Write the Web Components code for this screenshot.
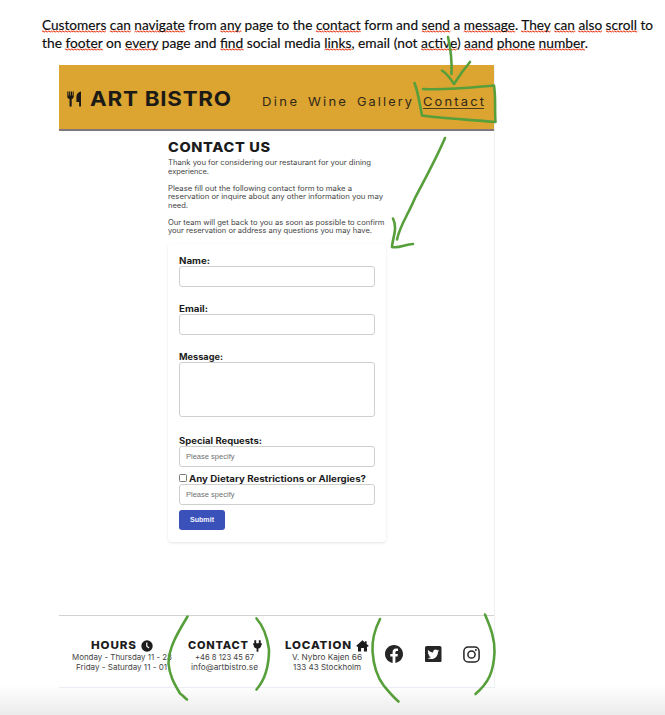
<!DOCTYPE html>
<html lang="en">
<head>
<meta charset="utf-8">
<title>Art Bistro – Contact</title>
<style>
body{margin:0;height:715px;overflow:hidden;background:#fff}
</style>
</head>
<body>
<walkthrough-page></walkthrough-page>
<script>
const define = (name, html, setup) => customElements.define(name, class extends HTMLElement {
  connectedCallback() {
    if (this.shadowRoot) return;
    const t = document.createElement('template');
    t.innerHTML = typeof html === 'function' ? html(this) : html;
    this.attachShadow({mode: 'open'}).append(t.content.cloneNode(true));
    if (setup) setup(this);
  }
});

/* One line of text, stretched to the width in its "w" attribute; "ls" is its tracking. */
define('text-line', `<style>
  :host{display:block;white-space:nowrap}
  span{display:block;width:max-content;transform-origin:0 50%}
  ::slotted(u){text-decoration:none;padding-bottom:1px;background:url("data:image/svg+xml,%3Csvg xmlns='http://www.w3.org/2000/svg' width='3' height='3'%3E%3Cpath d='M-.5 2.500L.750.700 2.250 2.300 3.500.700' fill='none' stroke='%23e8401f' stroke-width='1'/%3E%3C/svg%3E") repeat-x 0 calc(100% - 1px)}
</style><span><slot></slot></span>`, el => {
  const span = el.shadowRoot.querySelector('span');
  const w = parseFloat(el.getAttribute('w'));
  const ls = parseFloat(el.getAttribute('ls')) || 0;
  span.style.letterSpacing = ls + 'px';
  const natural = span.getBoundingClientRect().width - ls;
  span.style.width = natural + 'px';
  span.style.transform = `scaleX(${w / natural})`;
  el.style.width = w + 'px';
});

const ICONS = {
  utensils: ['0 0 15 16', '<path d="M.3.600h1.200v4h.6v-4h1.200v4h.6v-4h1.200v4h.6v-4h1v4.800c0 1.500-.9 2.200-2 2.500v7.700H2.500V7.900C1.200 7.600.3 6.900.3 5.400z"/><path d="M14 .5v14.900h-1.900V11H9.400V5.700C9.400 3 11.500.9 14 .5z"/>'],
  clock: ['0 0 12 12', '<circle cx="6" cy="6" r="5.700"/><path d="M5.800 2.500v3.700l2.300 1.700" fill="none" stroke="#fff" stroke-width="1.200"/>'],
  plug: ['0 0 9 12', '<path d="M1.300.2h1.900v3h2.600v-3h1.900v3h1.100v1.700h-.5c0 1.900-1.100 3.200-2.900 3.600v3.300H3.600V8.500C1.800 8.100.700 6.800.700 4.900H.2V3.200h1.100z"/>'],
  home: ['0 0 13 12', '<path d="M6.500.3 8.900 2.400V1.300h1.700v2.600l2.100 1.900-.7.900h-1v4.900H7.900V8H5.100v3.600H2V6.700H1l-.7-.9z"/>'],
  facebook: ['8 8 496 496', '<path d="M504 256C504 119 393 8 256 8S8 119 8 256c0 123.780 90.690 226.380 209.250 245V327.690h-63V256h63v-54.640c0-62.150 37-96.480 93.670-96.480 27.140 0 55.520 4.840 55.520 4.840v61h-31.280c-30.800 0-40.410 19.120-40.410 38.730V256h68.780l-11 71.690h-57.780V501C413.310 482.380 504 379.780 504 256z"/>'],
  twitter: ['0 32 448 448', '<path d="M400 32H48C21.500 32 0 53.500 0 80v352c0 26.500 21.500 48 48 48h352c26.500 0 48-21.500 48-48V80c0-26.500-21.500-48-48-48zm-48.900 158.800c.2 2.800.2 5.700.2 8.500 0 86.700-66 186.600-186.600 186.600-37.200 0-71.700-10.800-100.700-29.400 5.300.6 10.400.8 15.800.8 30.700 0 58.900-10.400 81.400-28-28.800-.6-53-19.500-61.300-45.500 10.100 1.500 19.200 1.500 29.600-1.200-30-6.100-52.500-32.500-52.500-64.400v-.8c8.700 4.900 18.900 7.900 29.600 8.300a65.447 65.447 0 0 1-29.200-54.600c0-12.200 3.200-23.400 8.900-33.100 32.300 39.800 80.800 65.800 135.200 68.600-9.300-44.500 24-80.600 64-80.600 18.900 0 35.900 7.900 47.900 20.700 14.800-2.800 29-8.300 41.600-15.800-4.900 15.200-15.200 28-28.800 36.100 13.200-1.400 26-5.100 37.800-10.200-8.900 13.100-20.100 24.700-32.900 34z"/>'],
  instagram: ['0 0 17 17', '<g fill="none" stroke="currentColor" stroke-width="1.500"><rect x=".9" y=".9" width="15.200" height="15.200" rx="4.300"/><circle cx="8.500" cy="8.500" r="3.600"/></g><circle cx="12.900" cy="4.100" r="1"/>']
};
define('ui-icon', el => {
  const [box, body] = ICONS[el.getAttribute('name')];
  return `<style>:host{display:block;flex:none}svg{display:block;width:100%;height:100%;fill:currentColor}</style><svg viewBox="${box}">${body}</svg>`;
});

define('doc-note', `<style>
  :host{display:block;padding:16px 0 0 42px;height:49px;color:#0c0c0c;font:14.300px/18px Lato,"Open Sans",sans-serif;-webkit-text-stroke:.15px}
</style>
<text-line w="611"><u>Customers</u> <u>can</u> <u>navigate</u> from <u>any</u> page to the <u>contact</u> form and <u>send</u> a <u>message</u>. <u>They</u> <u>can</u> <u>also</u> <u>scroll</u> to</text-line>
<text-line w="546">the <u>footer</u> on <u>every</u> page and <u>find</u> social media <u>links</u>, email (not <u>active</u>) <u>aand</u> <u>phone</u> <u>number</u>.</text-line>`);

define('site-header', `<style>
  :host{display:flex;box-sizing:border-box;height:66px;padding-left:8px;background:#dca430;border-bottom:2px solid #81777a;color:#1b1a17}
  ui-icon{width:15px;height:16px;margin:26px 8px 0 0}
  .logo{font:700 20.500px/24px Inter,sans-serif;margin:22px 31px 0 0}
  nav{display:grid;grid-template-columns:46px 49px 66px 62px;align-items:start;font:400 12px/16px Inter,sans-serif;margin-top:29px;color:#302819}
  .on{height:14px;border-bottom:1px solid #4c3c1c}
</style>
<ui-icon name="utensils"></ui-icon><text-line class="logo" w="141" ls=".7">ART BISTRO</text-line>
<nav><text-line w="35" ls="2.200">Dine</text-line><text-line w="38" ls="2">Wine</text-line><text-line w="55" ls="2">Gallery</text-line><text-line class="on" w="61" ls="2">Contact</text-line></nav>`);

define('intro-copy', `<style>
  :host{display:block;box-sizing:border-box;height:113px;padding:8px 0 0;color:#444;font:400 7.300px/8.600px Inter,sans-serif}
  h1{margin:0 0 4px;font:800 13.300px/16px Inter,sans-serif;color:#1c1c1c}
  p{margin:0 0 8.400px}
</style>
<h1><text-line w="102" ls=".6">CONTACT US</text-line></h1>
<p><text-line w="203">Thank you for considering our restaurant for your dining</text-line><text-line w="41">experience.</text-line></p>
<p><text-line w="184">Please fill out the following contact form to make a</text-line><text-line w="215">reservation or inquire about any other information you may</text-line><text-line w="20">need.</text-line></p>
<p><text-line w="216.500">Our team will get back to you as soon as possible to confirm</text-line><text-line w="204">your reservation or address any questions you may have.</text-line></p>`);

define('form-field', el => `<style>
  :host{display:block;color:#1c1c1c}
  .l{display:flex;height:10px;padding-top:1px;font:700 8.600px/11px Inter,sans-serif}
  .box{box-sizing:border-box;width:196px;height:${el.getAttribute('h') || 21}px;border:1px solid #cfcfcf;border-radius:3px;background:#fff;padding:0 5.500px;font:7.300px/19px "Liberation Sans",sans-serif;color:#707070}
  .k{box-sizing:border-box;width:8px;height:8px;border:1px solid #777;border-radius:1.500px;margin:0 2px 0 0}
</style>
<div class="l">${el.hasAttribute('check') ? '<span class="k"></span>' : ''}<text-line w="${el.getAttribute('w')}">${el.getAttribute('label')}</text-line></div>
<div class="box">${el.hasAttribute('hint') ? `<text-line w="48.500">${el.getAttribute('hint')}</text-line>` : ''}</div>`);

define('contact-form', `<style>
  :host{display:block;box-sizing:border-box;width:218px;height:298px;padding:11px 11px 0;border-radius:4px;background:#fff;box-shadow:0 1px 3px rgba(0,0,0,.11)}
  .m{margin-bottom:16px}.n{margin-bottom:18px}.s{margin-bottom:6px}.e{margin-bottom:5px}
  button{display:block;box-sizing:border-box;width:46px;height:20px;border:0;border-radius:3px;padding:0 0 0 11px;background:#3951b8;color:#f3f4ff;font:bold 7px/20px "Liberation Sans",sans-serif;text-align:left}
</style>
<form-field class="m" label="Name:" w="31"></form-field>
<form-field class="m" label="Email:" w="29"></form-field>
<form-field class="n" label="Message:" w="44" h="55"></form-field>
<form-field class="s" label="Special Requests:" w="83" hint="Please specify"></form-field>
<form-field class="e" label="Any Dietary Restrictions or Allergies?" w="177" hint="Please specify" check></form-field>
<button><text-line w="24">Submit</text-line></button>`);

define('footer-column', el => `<style>
  :host{display:flex;flex-direction:column;align-items:center;color:#444;font:400 8px/10px Inter,sans-serif}
  .h{display:flex;align-items:center;gap:5px;height:13px;padding-top:1px;color:#1c1c1c;font:800 10.800px/14px Inter,sans-serif}
  ui-icon{width:${el.getAttribute('iw')}px;height:12px}
</style>
<div class="h"><text-line w="${el.getAttribute('w')}" ls=".8">${el.getAttribute('heading')}</text-line><ui-icon name="${el.getAttribute('icon')}"></ui-icon></div><slot></slot>`);

define('site-footer', `<style>
  :host{display:flex;box-sizing:border-box;height:72px;border-top:1.500px solid #d2d2d2;padding:22px 0 0 12px;color:#262626}
  .a{width:101px}.b{width:67px;margin-left:19px}.c{width:84px;margin-left:27px}
  .s{display:flex;align-items:center;height:18px;margin:7px 0 0 16px}
  .f{width:18px;height:18px}.t{width:16.500px;height:16.500px;margin-left:22px}.i{width:17px;height:17px;margin-left:21px}
</style>
<footer-column class="a" heading="HOURS" w="45" icon="clock" iw="12"><text-line w="100">Monday - Thursday 11 - 23</text-line><text-line w="91">Friday - Saturday 11 - 01</text-line></footer-column>
<footer-column class="b" heading="CONTACT" w="60" icon="plug" iw="9"><text-line w="59">+46 8 123 45 67</text-line><text-line w="67">info@artbistro.se</text-line></footer-column>
<footer-column class="c" heading="LOCATION" w="66" icon="home" iw="13"><text-line w="70">V. Nybro Kajen 66</text-line><text-line w="68">133 43 Stockholm</text-line></footer-column>
<div class="s"><ui-icon class="f" name="facebook"></ui-icon><ui-icon class="t" name="twitter"></ui-icon><ui-icon class="i" name="instagram"></ui-icon></div>`);

/* Hand-drawn green marks lying over the page. */
define('ink-marks', `<style>:host{position:absolute;inset:0;pointer-events:none}svg{display:block}</style>
<svg width="665" height="715" fill="none" stroke="#579f3b" stroke-width="2.600" stroke-linecap="round" stroke-linejoin="round">
<path d="M448 37c3 13 4 25 3.500 37M442 70.500c6 4 9 9 12 13.500 5-8 10-15 16-22"/>
<path d="M414.500 83c4 10 5 21 7.500 32.500 22 3 47 4 73.500 6.500-1-12 .5-24-1.500-36.500-23 2-47 5-71 3.500"/>
<path d="M445 138c-9 21-19 39-30 60-7 17-15 27-18 41.500M393 218.500c5 10-.5 19-1 28.500 8 1.500 13-3 21-3"/>
<path d="M187.500 616.500c-9 15-19 31-19 47 1 13 7 22 11.500 30 3 2 4 3.500 7 6M256.500 618.500c8 9 11 20 12.500 31 0 16-3 29-12.500 40"/>
<path d="M380 619c-6 12-8 23-7.500 32 1 16 6 28 11.500 35 5 6 9 11 14.500 15.500M485 614.500c6 14 10 25 9.500 38-1 20-6 30-19 41.500"/>
</svg>`);

define('walkthrough-page', `<style>
  :host{display:block;position:relative;height:715px;background:linear-gradient(#fff 685px,#ebebeb 715px)}
  .shot{display:flex;flex-direction:column;width:435px;height:622px;margin-left:59px;border-right:1.500px solid #efeff6;border-bottom:1.500px solid #ececf4;background:#fff}
  main{flex:1;padding-left:109px}
</style>
<doc-note></doc-note>
<div class="shot"><site-header></site-header><main><intro-copy></intro-copy><contact-form></contact-form></main><site-footer></site-footer></div>
<ink-marks></ink-marks>`);
</script>
</body>
</html>
